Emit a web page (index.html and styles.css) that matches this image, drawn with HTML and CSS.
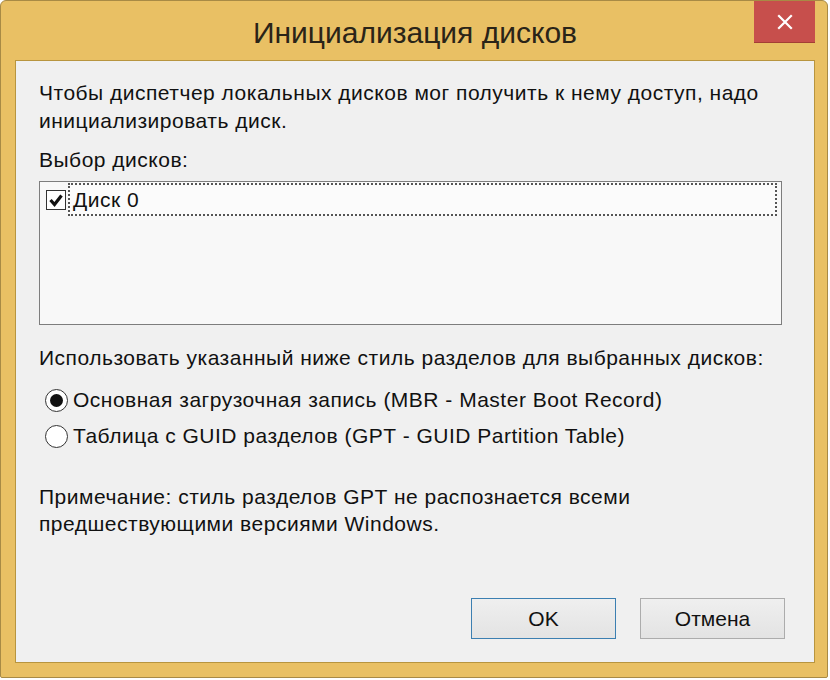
FILE: index.html
```html
<!DOCTYPE html>
<html lang="ru">
<head>
<meta charset="utf-8">
<title>Инициализация дисков</title>
<link rel="stylesheet" href="styles.css">
</head>
<body>
<div class="window">
  <div class="titlebar">
    <div class="spacer"></div>
    <div class="title">Инициализация дисков</div>
    <div class="close">
      <svg width="16" height="16" viewBox="0 0 16 16"><path d="M2 2 L14 14 M14 2 L2 14" stroke="#fff" stroke-width="2.2" stroke-linecap="square" fill="none"/></svg>
    </div>
  </div>
  <div class="client">
    <p class="intro">Чтобы диспетчер локальных дисков мог получить к нему доступ, надо инициализировать диск.</p>
    <div class="label">Выбор дисков:</div>
    <div class="listbox">
      <div class="item">
        <span class="checkbox">
          <svg width="16" height="16" viewBox="0 0 16 16"><path d="M2.5 8 L6.5 12.5 L13.5 3.5" stroke="#111" stroke-width="3.2" fill="none"/></svg>
        </span>
        <span class="item-text">Диск 0</span>
      </div>
    </div>
    <div class="label label-style">Использовать указанный ниже стиль разделов для выбранных дисков:</div>
    <div class="radios">
      <div class="radio-row"><span class="radio checked"><span class="dot"></span></span><span>Основная загрузочная запись (MBR - Master Boot Record)</span></div>
      <div class="radio-row"><span class="radio"></span><span>Таблица с GUID разделов (GPT - GUID Partition Table)</span></div>
    </div>
    <p class="note">Примечание: стиль разделов GPT не распознается всеми предшествующими версиями Windows.</p>
    <div class="buttons">
      <div class="btn default">OK</div>
      <div class="btn">Отмена</div>
    </div>
  </div>
</div>
</body>
</html>
```
FILE: styles.css
```css
html, body {
  margin: 0;
  padding: 0;
  background: #ffffff;
}
body {
  font-family: "Liberation Sans", Arial, sans-serif;
  color: #111;
}
.window {
  box-sizing: border-box;
  width: 828px;
  height: 678px;
  background: #e9c064;
  border: 1px solid #a88a45;
  border-radius: 6px 6px 2px 2px;
  padding: 0 12px 14px 14px;
  display: flex;
  flex-direction: column;
}
.titlebar {
  height: 59px;
  display: grid;
  grid-template-columns: 61px 1fr 61px;
  align-items: start;
}
.title {
  text-align: center;
  font-size: 30px;
  line-height: 34px;
  padding-top: 15px;
  color: #2a2418;
}
.close {
  height: 42px;
  background: #c74f4c;
  border-bottom: 1px solid #a33e35;
  box-sizing: border-box;
  display: flex;
  align-items: center;
  justify-content: center;
}
.client {
  flex: 1;
  background: #f0f0f0;
  border: 1px solid #b8953f;
  padding: 18px 32px 23px 23px;
  display: flex;
  flex-direction: column;
  font-size: 21px;
  letter-spacing: 0.5px;
  line-height: 28px;
}
.intro, .note {
  margin: 0;
}
.label {
  margin-top: 11px;
}
.listbox {
  margin-top: 7px;
  height: 144px;
  box-sizing: border-box;
  border: 1px solid #7d7d7d;
  background: #f8f8f8;
  padding: 1px;
}
.item {
  display: flex;
  align-items: center;
  height: 33px;
}
.checkbox {
  width: 20px;
  height: 20px;
  box-sizing: border-box;
  border: 1px solid #333;
  background: #fff;
  margin-left: 5px;
  margin-right: 2px;
  display: flex;
  align-items: center;
  justify-content: center;
}
.item-text {
  flex: 1;
  height: 33px;
  box-sizing: border-box;
  border: 2px dotted #555;
  padding-left: 3px;
  line-height: 29px;
  margin-right: 3px;
  background: #fbfbfb;
}
.label-style {
  margin-top: 19px;
}
.radios {
  margin-top: 10px;
  display: flex;
  flex-direction: column;
}
.radio-row {
  display: flex;
  align-items: center;
  height: 36px;
  gap: 5px;
}
.radio {
  width: 23px;
  height: 23px;
  box-sizing: border-box;
  border: 1px solid #333;
  border-radius: 50%;
  background: #fff;
  margin-left: 6px;
  display: flex;
  align-items: center;
  justify-content: center;
}
.dot {
  width: 13px;
  height: 13px;
  border-radius: 50%;
  background: #111;
}
.note {
  margin-top: 29px;
  line-height: 27px;
}
.buttons {
  margin-top: auto;
  margin-right: -3px;
  display: flex;
  justify-content: flex-end;
  gap: 24px;
}
.btn {
  width: 145px;
  height: 41px;
  box-sizing: border-box;
  border: 1px solid #acacac;
  background: linear-gradient(#efefef, #e3e3e3);
  display: flex;
  align-items: center;
  justify-content: center;
  font-size: 21px;
  letter-spacing: 0;
}
.btn.default {
  border-color: #3c7fb1;
}
```
